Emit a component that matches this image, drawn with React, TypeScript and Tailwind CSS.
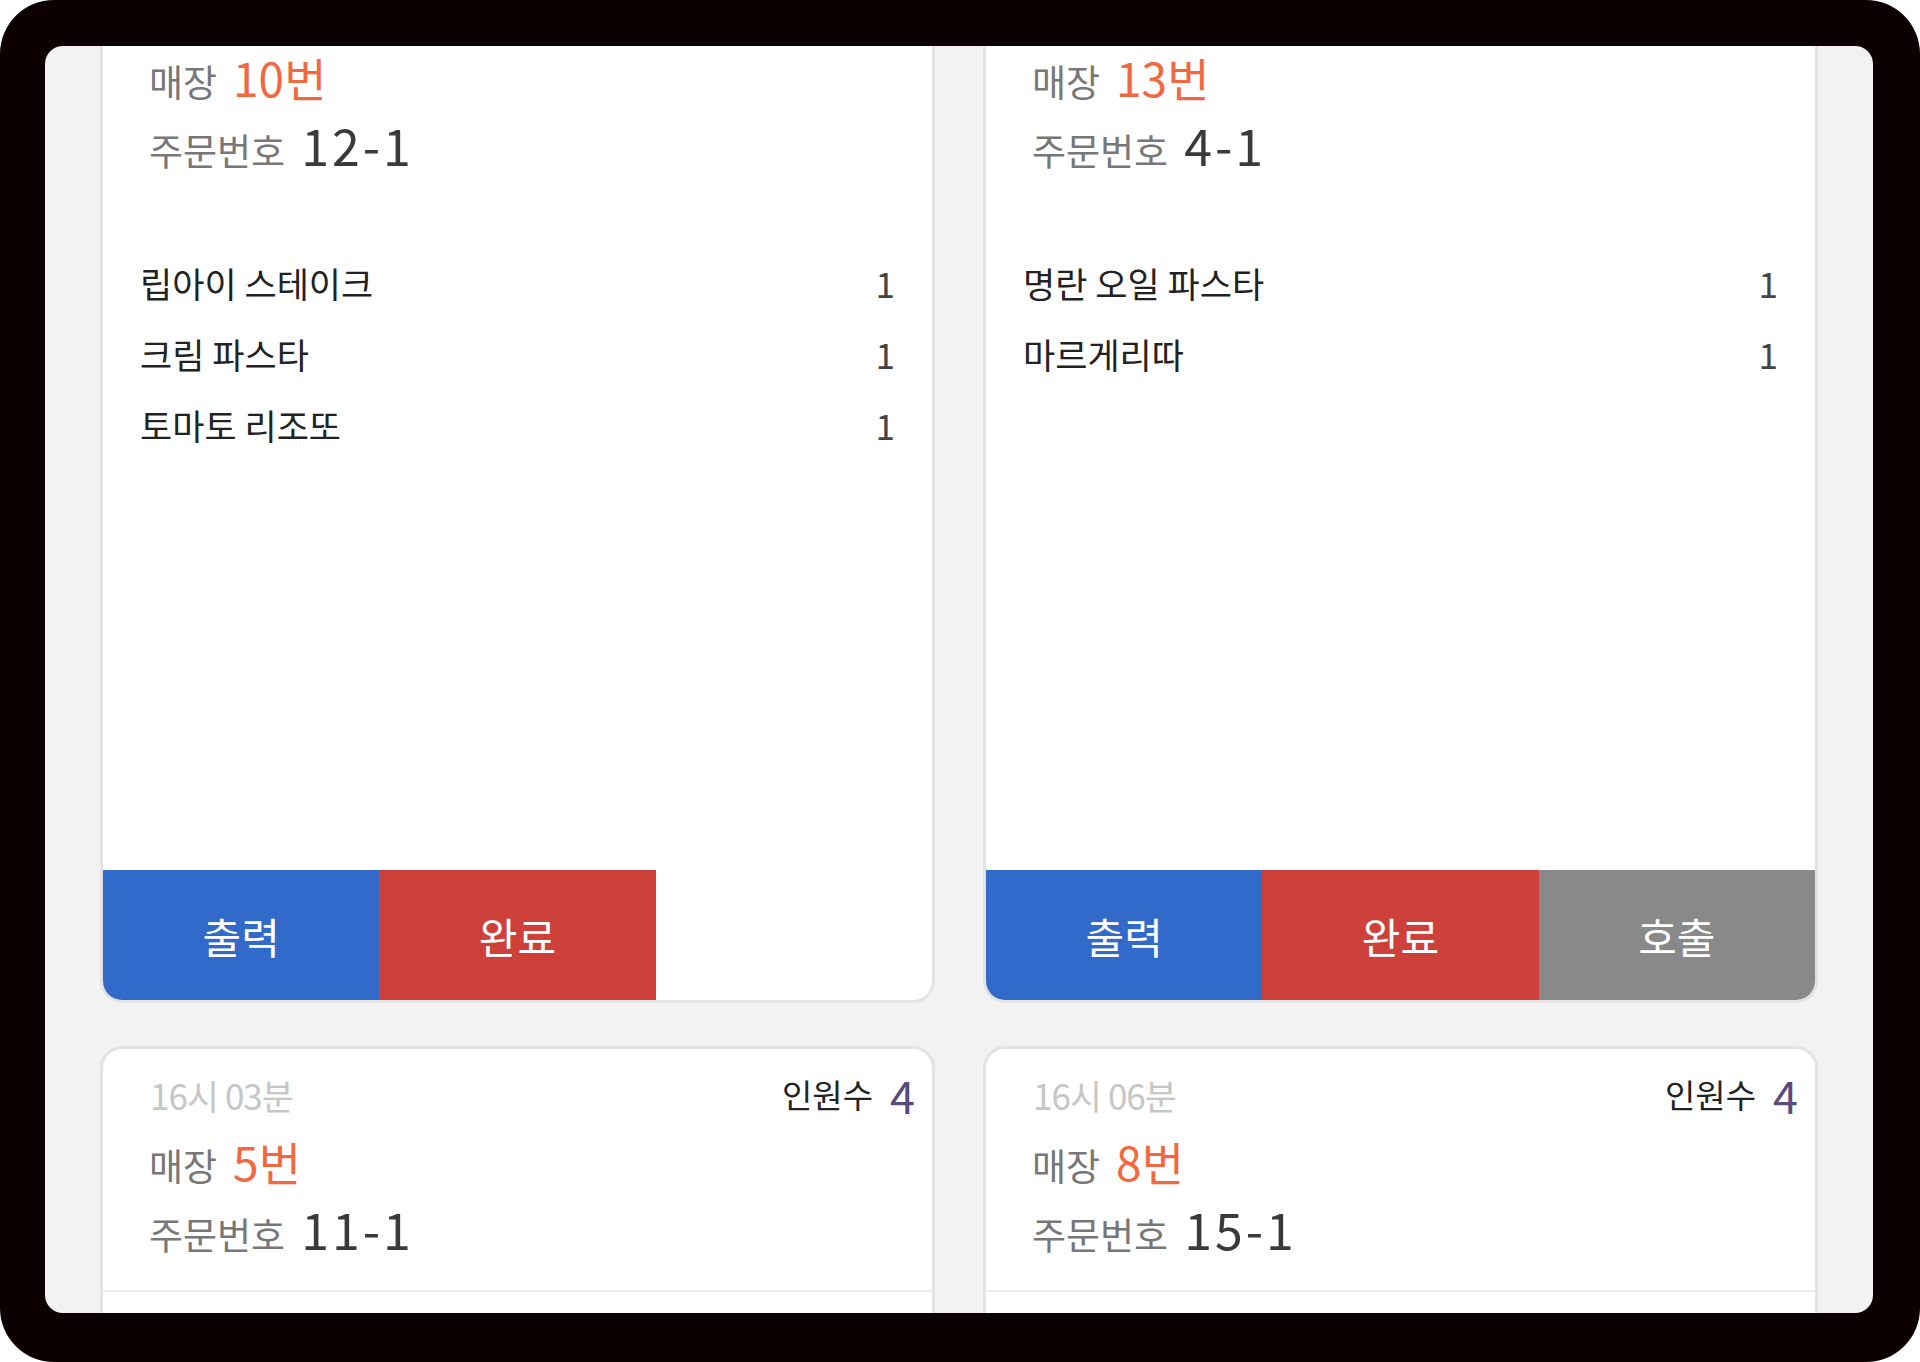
type OrderItem = { name: string; qty: number };

type Order = {
  time: string;
  people: number;
  store: number;
  orderNo: string;
  items: OrderItem[];
  canCall: boolean;
  divider: boolean;
};

const orders: Order[] = [
  {
    time: "15시 52분",
    people: 3,
    store: 10,
    orderNo: "12-1",
    items: [
      { name: "립아이 스테이크", qty: 1 },
      { name: "크림 파스타", qty: 1 },
      { name: "토마토 리조또", qty: 1 },
    ],
    canCall: false,
    divider: false,
  },
  {
    time: "15시 58분",
    people: 2,
    store: 13,
    orderNo: "4-1",
    items: [
      { name: "명란 오일 파스타", qty: 1 },
      { name: "마르게리따", qty: 1 },
    ],
    canCall: true,
    divider: false,
  },
  {
    time: "16시 03분",
    people: 4,
    store: 5,
    orderNo: "11-1",
    items: [
      { name: "까르보나라", qty: 2 },
      { name: "시저 샐러드", qty: 1 },
    ],
    canCall: false,
    divider: true,
  },
  {
    time: "16시 06분",
    people: 4,
    store: 8,
    orderNo: "15-1",
    items: [
      { name: "안심 스테이크", qty: 1 },
      { name: "봉골레 파스타", qty: 2 },
    ],
    canCall: false,
    divider: true,
  },
];

function OrderCard({ order }: { order: Order }) {
  return (
    <div className="flex h-[1041px] flex-col overflow-hidden rounded-[22px] border-[3px] border-[#e3e3e3] bg-white">
      <div className="pt-[11px]">
        <div className="flex h-[68px] items-center justify-between pl-[47px] pr-[17px]">
          <span className="text-[35px] leading-none tracking-[-1px] text-[#c6c6c6]">
            {order.time}
          </span>
          <div className="flex items-center gap-[17px]">
            <span className="text-[33px] leading-none text-[#222222]">인원수</span>
            <span className="text-[45px] leading-none text-[#5b4a7c]">{order.people}</span>
          </div>
        </div>
        <div className="flex h-[66px] items-center pl-[46px]">
          <div className="flex items-baseline gap-[16px]">
            <span className="text-[37px] leading-none text-[#777777]">매장</span>
            <span className="text-[46px] leading-none text-[#f2683f]">{order.store}번</span>
          </div>
        </div>
        <div className="flex h-[68px] items-center pl-[46px]">
          <div className="flex items-baseline gap-[16px]">
            <span className="text-[37px] leading-none text-[#777777]">주문번호</span>
            <span className="text-[50px] leading-none tracking-[3px] text-[#3a3a3a]">
              {order.orderNo}
            </span>
          </div>
        </div>
      </div>
      <div
        className={
          order.divider
            ? "mt-[28px] h-[2px] bg-[#ededed]"
            : "mt-[28px] h-[2px] bg-white"
        }
      />
      <div className="flex flex-col pt-[39px]">
        {order.items.map((item) => (
          <div
            key={item.name}
            className="flex h-[71px] items-center justify-between pl-[37px] pr-[37px]"
          >
            <span className="text-[35px] leading-none text-[#222222]">{item.name}</span>
            <span className="text-[35px] leading-none text-[#444444]">{item.qty}</span>
          </div>
        ))}
      </div>
      <div className="mt-auto grid h-[130px] grid-cols-3">
        <button className="bg-[#316ac8] text-[42px] text-white">출력</button>
        <button className="bg-[#ce413b] text-[42px] text-white">완료</button>
        {order.canCall && (
          <button className="bg-[#898989] text-[42px] text-white">호출</button>
        )}
      </div>
    </div>
  );
}

export default function App() {
  return (
    <div
      className="h-[1362px] w-[1920px] bg-white"
      style={{ fontFamily: '"Noto Sans CJK KR", "Noto Sans", sans-serif' }}
    >
      <div className="h-full rounded-[54px] bg-[#0c0000] pb-[49px] pl-[45px] pr-[47px] pt-[46px]">
        <div className="h-full overflow-hidden rounded-[18px] bg-[#f2f2f2] px-[55px]">
          <div className="-mt-[84px] grid grid-cols-2 gap-x-[48px] gap-y-[43px]">
            {orders.map((order) => (
              <OrderCard key={order.orderNo} order={order} />
            ))}
          </div>
        </div>
      </div>
    </div>
  );
}
